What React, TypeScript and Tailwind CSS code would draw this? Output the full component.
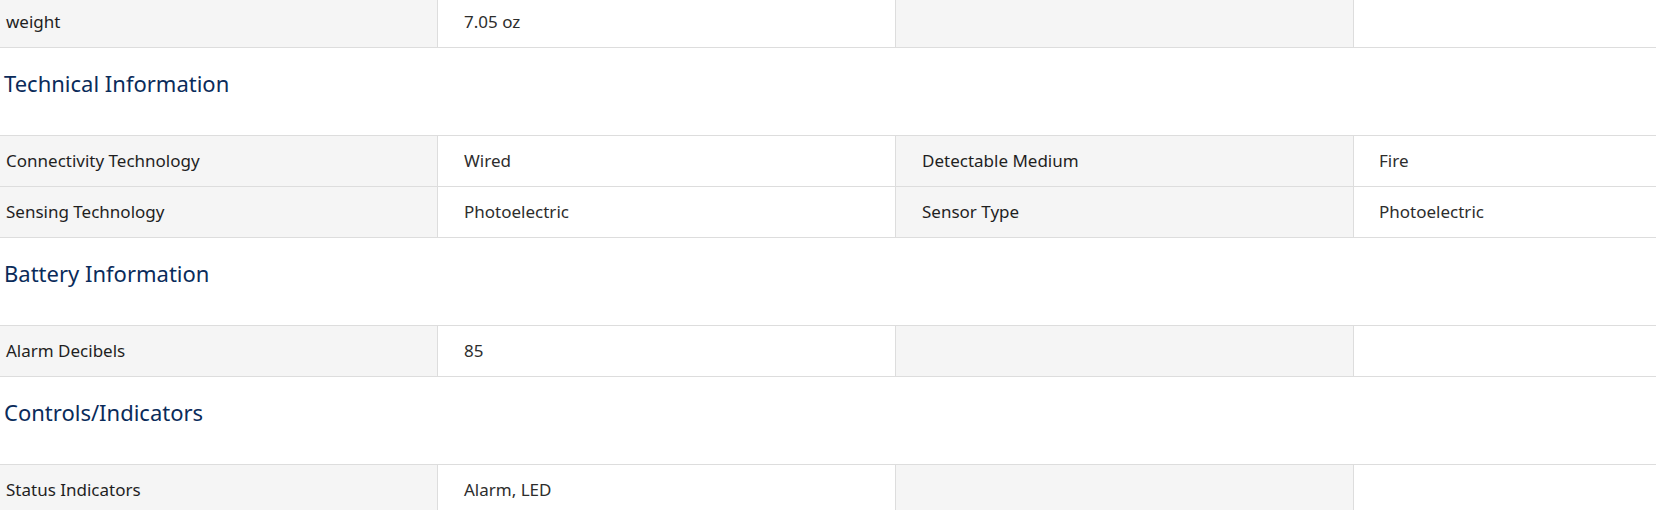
import React from "react";

type Cell = { label: string; value: string };
type Section = { title?: string; rows: Cell[][] };

const sections: Section[] = [
  { rows: [[{ label: "weight", value: "7.05 oz" }]] },
  {
    title: "Technical Information",
    rows: [
      [
        { label: "Connectivity Technology", value: "Wired" },
        { label: "Detectable Medium", value: "Fire" },
      ],
      [
        { label: "Sensing Technology", value: "Photoelectric" },
        { label: "Sensor Type", value: "Photoelectric" },
      ],
    ],
  },
  { title: "Battery Information", rows: [[{ label: "Alarm Decibels", value: "85" }]] },
  { title: "Controls/Indicators", rows: [[{ label: "Status Indicators", value: "Alarm, LED" }]] },
];

function Row({ cells }: { cells: Cell[] }) {
  const second = cells[1];
  return (
    <div className="grid grid-cols-[438px_458px_458px_1fr] h-[51px] border-b border-[#dddddd]">
      <div className="bg-[#f5f5f5] border-r border-[#dddddd] flex items-center pl-[6px] text-[#1f1f1f]">
        {cells[0].label}
      </div>
      <div className="border-r border-[#dddddd] flex items-center pl-[26px] text-[#2d2d2d]">
        {cells[0].value}
      </div>
      <div className="bg-[#f5f5f5] border-r border-[#dddddd] flex items-center pl-[26px] text-[#1f1f1f]">
        {second ? second.label : ""}
      </div>
      <div className="flex items-center pl-[25px] text-[#2d2d2d]">{second ? second.value : ""}</div>
    </div>
  );
}

export default function App() {
  return (
    <div
      className="w-[1656px] h-[510px] overflow-hidden bg-white text-[17px]"
      style={{ fontFamily: '"Noto Sans", "Open Sans", sans-serif' }}
    >
      <div className="-mt-[3px]">
        {sections.map((s, i) => (
          <div key={i}>
            {s.title && (
              <div className="h-[87px] pt-[20px] pl-[4px] text-[22px] leading-[30px] text-[#0a2b5a]">
                {s.title}
              </div>
            )}
            <div className={s.title ? "border-t border-[#dddddd]" : ""}>
              {s.rows.map((r, j) => (
                <Row key={j} cells={r} />
              ))}
            </div>
          </div>
        ))}
      </div>
    </div>
  );
}
